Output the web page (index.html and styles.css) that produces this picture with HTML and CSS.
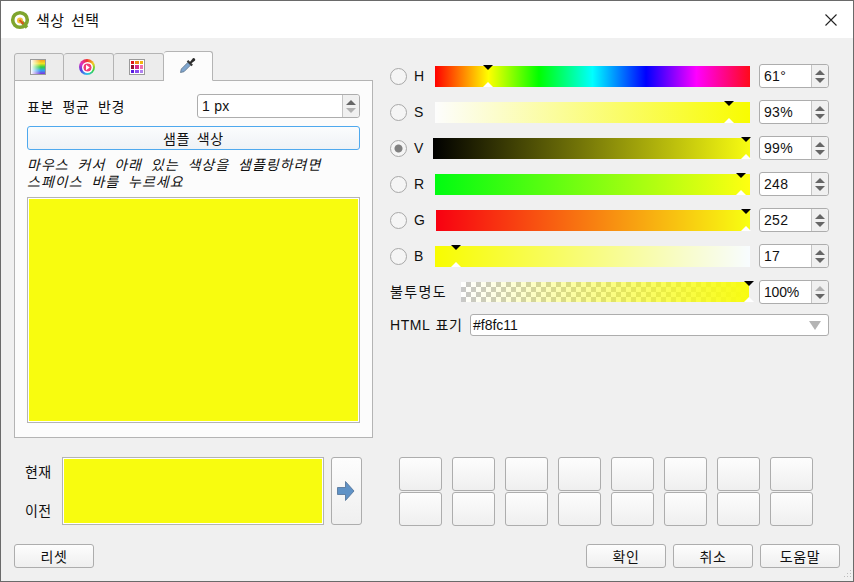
FILE: index.html
```html
<!DOCTYPE html>
<html lang="ko">
<head>
  <meta charset="UTF-8">
  <title>색상 선택</title>
  <link rel="stylesheet" href="styles.css">
</head>
<body>

<div class="window">
  <div class="titlebar">
    <svg class="logo" width="20" height="20" viewBox="0 0 20 20">
      <circle cx="10" cy="10" r="7.3" fill="none" stroke="#7fa52d" stroke-width="3.6"/>
      <path d="M11 11l6 6.5" stroke="#7fa52d" stroke-width="3.4"/>
      <circle cx="10" cy="10.5" r="3" fill="#f0c33c"/>
      <path d="M9.5 10l4 4" stroke="#d9541e" stroke-width="2"/>
    </svg>
    <span class="title">색상 선택</span>
    <svg class="close" width="12" height="12" viewBox="0 0 12 12">
      <path d="M.5.5l11 11M11.5.5l-11 11" stroke="#222" stroke-width="1.1" fill="none"/>
    </svg>
  </div>

  <div class="main">
    <div class="left">
      <div class="tabs">
        <div class="tab">
          <span class="tab-icon icon-ramp"></span>
        </div>
        <div class="tab">
          <span class="icon-wheel">
            <svg width="10" height="10" viewBox="0 0 10 10">
              <circle cx="5" cy="5" r="4.5" fill="#f03a78"/>
              <path d="M3.300 2l4.200 3-4.200 3z" fill="#fff"/>
            </svg>
          </span>
        </div>
        <div class="tab">
          <span class="tab-icon icon-grid">
            <i class="c1"></i><i class="c2"></i><i class="c3"></i>
            <i class="c4"></i><i class="c5"></i><i class="c6"></i>
            <i class="c7"></i><i class="c8"></i><i class="c9"></i>
          </span>
        </div>
        <div class="tab tab-active">
          <svg width="18" height="18" viewBox="0 0 18 18">
            <path d="M1.500 16.500l.8-3.500L9 6.300l2.700 2.700L5 15.700z" fill="#7fa6cf" stroke="#5f7488" stroke-width=".8"/>
            <path d="M8.500 4.800l4.700 4.700" stroke="#3a3a3a" stroke-width="2.200"/>
            <path d="M10.500 6.500l3.400-4.300a1.700 1.700 0 0 1 2.200 2.200L11.800 7.800z" fill="#2b2b2b"/>
          </svg>
        </div>
      </div>

      <div class="panel">
        <div class="radius-row">
          <span class="ko">표본 평균 반경</span>
          <div class="spin spin-wide">
            <span class="spin-value">1 px</span>
            <span class="spin-arrows"><i class="up"></i><i class="down dim"></i></span>
          </div>
        </div>
        <button class="btn sample-btn">샘플 색상</button>
        <p class="hint">마우스 커서 아래 있는 색상을 샘플링하려면<br>스페이스 바를 누르세요</p>
        <div class="preview"><div class="fill"></div></div>
      </div>
    </div>

    <div class="right">
      <div class="row">
        <span class="radio"></span><span class="lbl lbl-h">H</span>
        <div class="bar bar-h"><i class="mark-top" style="left:53px"></i><i class="mark-bottom" style="left:53px"></i></div>
        <div class="spin"><span class="spin-value">61°</span><span class="spin-arrows"><i class="up"></i><i class="down"></i></span></div>
      </div>
      <div class="row">
        <span class="radio"></span><span class="lbl lbl-h">S</span>
        <div class="bar bar-s"><i class="mark-top" style="left:294px"></i><i class="mark-bottom" style="left:294px"></i></div>
        <div class="spin"><span class="spin-value">93%</span><span class="spin-arrows"><i class="up"></i><i class="down"></i></span></div>
      </div>
      <div class="row">
        <span class="radio radio-on"></span><span class="lbl lbl-v">V</span>
        <div class="bar bar-v"><i class="mark-top" style="left:313px"></i><i class="mark-bottom" style="left:313px"></i></div>
        <div class="spin"><span class="spin-value">99%</span><span class="spin-arrows"><i class="up"></i><i class="down"></i></span></div>
      </div>
      <div class="row">
        <span class="radio"></span><span class="lbl lbl-h">R</span>
        <div class="bar bar-r"><i class="mark-top" style="left:306px"></i><i class="mark-bottom" style="left:306px"></i></div>
        <div class="spin"><span class="spin-value">248</span><span class="spin-arrows"><i class="up"></i><i class="down"></i></span></div>
      </div>
      <div class="row">
        <span class="radio"></span><span class="lbl lbl-g">G</span>
        <div class="bar bar-g"><i class="mark-top" style="left:310px"></i><i class="mark-bottom" style="left:310px"></i></div>
        <div class="spin"><span class="spin-value">252</span><span class="spin-arrows"><i class="up"></i><i class="down"></i></span></div>
      </div>
      <div class="row">
        <span class="radio"></span><span class="lbl lbl-h">B</span>
        <div class="bar bar-b"><i class="mark-top" style="left:21px"></i><i class="mark-bottom" style="left:21px"></i></div>
        <div class="spin"><span class="spin-value">17</span><span class="spin-arrows"><i class="up"></i><i class="down"></i></span></div>
      </div>
      <div class="row">
        <span class="lbl lbl-opacity">불투명도</span>
        <div class="bar bar-a"><i class="mark-top" style="left:288px"></i><i class="mark-bottom" style="left:288px"></i></div>
        <div class="spin"><span class="spin-value spin-tight">100%</span><span class="spin-arrows"><i class="up dim"></i><i class="down"></i></span></div>
      </div>
      <div class="html-row">
        <span class="lbl lbl-html">HTML 표기</span>
        <div class="combo"><span>#f8fc11</span><i class="combo-arrow"></i></div>
      </div>
    </div>
  </div>

  <div class="colors">
    <div class="color-labels">
      <span>현재</span>
      <span>이전</span>
    </div>
    <div class="well"><div class="fill"></div></div>
    <button class="btn arrow-btn">
      <svg width="18" height="20" viewBox="0 0 18 20">
        <path d="M.5 6.500h8V.5l8.500 9.500-8.500 9.500v-6h-8z" fill="#5f92c6" stroke="#4f7096" stroke-width=".8"/>
      </svg>
    </button>
    <div class="swatches">
      <button class="btn"></button><button class="btn"></button><button class="btn"></button><button class="btn"></button>
      <button class="btn"></button><button class="btn"></button><button class="btn"></button><button class="btn"></button>
      <button class="btn"></button><button class="btn"></button><button class="btn"></button><button class="btn"></button>
      <button class="btn"></button><button class="btn"></button><button class="btn"></button><button class="btn"></button>
    </div>
  </div>

  <div class="footer">
    <button class="btn action">리셋</button>
    <div class="footer-right">
      <button class="btn action">확인</button>
      <button class="btn action">취소</button>
      <button class="btn action">도움말</button>
    </div>
  </div>

  <svg class="grip" width="11" height="11" viewBox="0 0 11 11" fill="#bdbdbd">
    <rect x="8" y="0" width="1" height="1"/>
    <rect x="5" y="3" width="1" height="1"/><rect x="8" y="3" width="1" height="1"/>
    <rect x="2" y="6" width="1" height="1"/><rect x="5" y="6" width="1" height="1"/><rect x="8" y="6" width="1" height="1"/>
  </svg>
</div>

</body>
</html>
```

FILE: styles.css
```css
* {
  box-sizing: border-box;
}

html, body {
  margin: 0;
  padding: 0;
}

body {
  font-family: "Liberation Sans", "Noto Sans CJK KR", sans-serif;
  font-size: 14px;
  color: #111;
}

.window {
  position: relative;
  width: 854px;
  height: 582px;
  background-color: #f0f0f0;
  border: 1px solid #6a6a6a;
  overflow: hidden;
}

.titlebar {
  display: flex;
  align-items: center;
  height: 37px;
  padding: 0 16px 0 9px;
  background-color: #fff;
}

.logo {
  flex: none;
}

.title {
  margin-left: 6px;
  font-size: 15px;
  word-spacing: 2px;
  letter-spacing: .4px;
}

.close {
  margin-left: auto;
}

.main {
  display: flex;
  gap: 17px;
  height: 400px;
  padding: 13px 0 0 13px;
}

/* left column */
.left {
  width: 359px;
}

.tabs {
  display: flex;
  align-items: flex-end;
  height: 30px;
  margin-bottom: -1px;
  position: relative;
}

.tab {
  display: flex;
  justify-content: center;
  align-items: center;
  width: 50px;
  height: 28px;
  padding-right: 3px;
  background-color: #ececec;
  border: 1px solid #b4b4b4;
  border-left-width: 0;
  border-radius: 3px 3px 0 0;
}

.tab:first-child {
  border-left-width: 1px;
}

.tab-active {
  position: relative;
  width: 49px;
  height: 30px;
  padding: 0 0 2px;
  background-color: #fcfcfc;
  border-bottom: 1px solid #fcfcfc;
}

.tab-icon {
  width: 16px;
  height: 16px;
  border: 1px solid #9a9a9a;
}

.icon-ramp {
  background:
    linear-gradient(to right, #fff, rgba(255,255,255,0) 70%),
    linear-gradient(to bottom, #f8a020, #f0e020, #30d040, #30a0f0, #8030e0);
}

.icon-wheel {
  display: flex;
  justify-content: center;
  align-items: center;
  width: 16px;
  height: 16px;
  border-radius: 50%;
  background: conic-gradient(#f03030, #f0d020, #30d040, #30c0f0, #5040e0, #e030c0, #f03030);
}

.icon-wheel svg {
  background-color: #fff;
  border-radius: 50%;
  padding: 1px;
  width: 11px;
  height: 11px;
}

.icon-grid {
  display: grid;
  grid-template-columns: repeat(3, 1fr);
  gap: 1px;
  padding: 1px;
  background-color: #fff;
}

.c1 { background-color: #e01818; }
.c2 { background-color: #ef8a12; }
.c3 { background-color: #f2b410; }
.c4 { background-color: #96122f; }
.c5 { background-color: #d5308a; }
.c6 { background-color: #f070b0; }
.c7 { background-color: #5a1ee0; }
.c8 { background-color: #8a4cf0; }
.c9 { background-color: #b080f0; }

.panel {
  height: 358px;
  padding: 13px 12px;
  background-color: #fcfcfc;
  border: 1px solid #b4b4b4;
}

.radius-row {
  display: flex;
  justify-content: space-between;
  align-items: center;
  height: 24px;
}

.ko {
  word-spacing: 4px;
  letter-spacing: .6px;
}

.spin {
  display: flex;
  flex: none;
  width: 70px;
  height: 24px;
  background-color: #fff;
  border: 1px solid #adadad;
  border-radius: 3px;
}

.spin-wide {
  width: 163px;
}

.spin-value {
  flex: 1;
  padding-left: 4px;
  line-height: 22px;
  letter-spacing: .3px;
}

.spin-tight {
  letter-spacing: -.2px;
}

.spin-arrows {
  display: flex;
  flex-direction: column;
  justify-content: center;
  align-items: center;
  gap: 3px;
  width: 17px;
  background-color: #f0f0f0;
  border-left: 1px solid #c4c4c4;
  border-radius: 0 3px 3px 0;
}

.up, .down {
  width: 0;
  height: 0;
  border-left: 5px solid transparent;
  border-right: 5px solid transparent;
}

.up {
  border-bottom: 5px solid #666;
}

.down {
  border-top: 5px solid #666;
}

.up.dim {
  border-bottom-color: #b0b0b0;
}

.down.dim {
  border-top-color: #b0b0b0;
}

.btn {
  display: block;
  margin: 0;
  padding: 0;
  font: inherit;
  letter-spacing: .7px;
  color: #111;
  background: linear-gradient(to bottom, #fdfdfd, #efefef);
  border: 1px solid #adadad;
  border-radius: 3px;
}

.sample-btn {
  width: 100%;
  height: 24px;
  margin-top: 8px;
  border-color: #4fa9ee;
  background: linear-gradient(to bottom, #fbfcfd, #eef2f6);
  word-spacing: 2px;
}

.hint {
  margin: 7px 0 6px;
  font-style: italic;
  line-height: 17px;
  word-spacing: 4px;
  letter-spacing: 1px;
  height: 34px;
}

.preview {
  height: 226px;
  padding: 1px;
  background-color: #fff;
  border: 1px solid #b4b4b4;
}

.fill {
  height: 100%;
  background-color: #f8fc0f;
}

/* right column */
.right {
  width: 439px;
  padding-top: 13px;
}

.row {
  display: flex;
  align-items: flex-start;
  height: 24px;
  margin-bottom: 12px;
}

.radio {
  flex: none;
  width: 17px;
  height: 17px;
  margin: 4px 7px 0 0;
  background-color: #f5f5f5;
  border: 1px solid #a8a8a8;
  border-radius: 50%;
}

.radio-on {
  background: radial-gradient(circle, #808080 0, #808080 3.5px, #f5f5f5 4.5px);
}

.lbl {
  flex: none;
  line-height: 24px;
}

.lbl-h { width: 21px; }
.lbl-v { width: 19px; }
.lbl-g { width: 22px; }
.lbl-opacity { width: 71px; letter-spacing: 1.4px; }
.lbl-html { width: 80px; letter-spacing: .6px; word-spacing: 1px; }

.bar {
  position: relative;
  flex: 1;
  height: 21px;
  margin: 2px 9px 0 0;
}

.mark-top, .mark-bottom {
  position: absolute;
  width: 0;
  height: 0;
  margin-left: -5px;
  border-left: 5px solid transparent;
  border-right: 5px solid transparent;
}

.mark-top {
  top: -1px;
  border-top: 5px solid #000;
}

.mark-bottom {
  bottom: 0;
  border-bottom: 5px solid #fff;
}

.bar-h {
  background: linear-gradient(to right, #ff0000 0%, #ffff00 17%, #00ff00 33%, #00ffff 50%, #0000ff 67%, #ff00ff 83%, #ff0a1a 100%);
}

.bar-s {
  background: linear-gradient(to right, #fdfdfd, #f8fc00);
}

.bar-v {
  background: linear-gradient(to right, #000, #f8fc11);
}

.bar-r {
  background: linear-gradient(to right, #00fc11, #ffff11);
}

.bar-g {
  background: linear-gradient(to right, #f80011, #f8ff11);
}

.bar-b {
  background: linear-gradient(to right, #f8fc00, #f8fcff);
}

.bar-a {
  height: 20px;
  margin-right: 10px;
  background:
    linear-gradient(to right, rgba(248,252,17,0), #f8fc11),
    repeating-conic-gradient(#c8c8c8 0 25%, #fff 0 50%) 0 0 / 10px 10px;
}

.html-row {
  display: flex;
  align-items: center;
  height: 22px;
  margin-top: -2px;
}

.combo {
  position: relative;
  flex: 1;
  height: 22px;
  padding-left: 2px;
  line-height: 20px;
  background-color: #fff;
  border: 1px solid #adadad;
  border-radius: 3px;
}

.combo-arrow {
  position: absolute;
  top: 6px;
  right: 7px;
  width: 0;
  height: 0;
  border-left: 6px solid transparent;
  border-right: 6px solid transparent;
  border-top: 9px solid #b4b4b4;
}

/* current / previous colour */
.colors {
  display: flex;
  align-items: flex-start;
  height: 69px;
  margin-top: 19px;
  padding-left: 13px;
}

.color-labels {
  display: flex;
  flex-direction: column;
  justify-content: space-between;
  width: 48px;
  height: 68px;
  padding: 4px 0 5px 11px;
  letter-spacing: .4px;
}

.well {
  width: 262px;
  height: 68px;
  padding: 1px;
  background-color: #fff;
  border: 1px solid #b4b4b4;
}

.arrow-btn {
  display: flex;
  justify-content: center;
  align-items: center;
  width: 31px;
  height: 68px;
  margin-left: 7px;
  padding-right: 2px;
}

.swatches {
  display: grid;
  grid-template-columns: repeat(8, 43px);
  grid-auto-rows: 34px;
  column-gap: 10px;
  row-gap: 1px;
  margin-left: 37px;
}

.footer {
  display: flex;
  justify-content: space-between;
  margin-top: 18px;
  padding: 0 13px;
}

.footer-right {
  display: flex;
  gap: 7px;
}

.action {
  width: 80px;
  height: 24px;
}

.grip {
  position: absolute;
  right: 0;
  bottom: 0;
}
```
